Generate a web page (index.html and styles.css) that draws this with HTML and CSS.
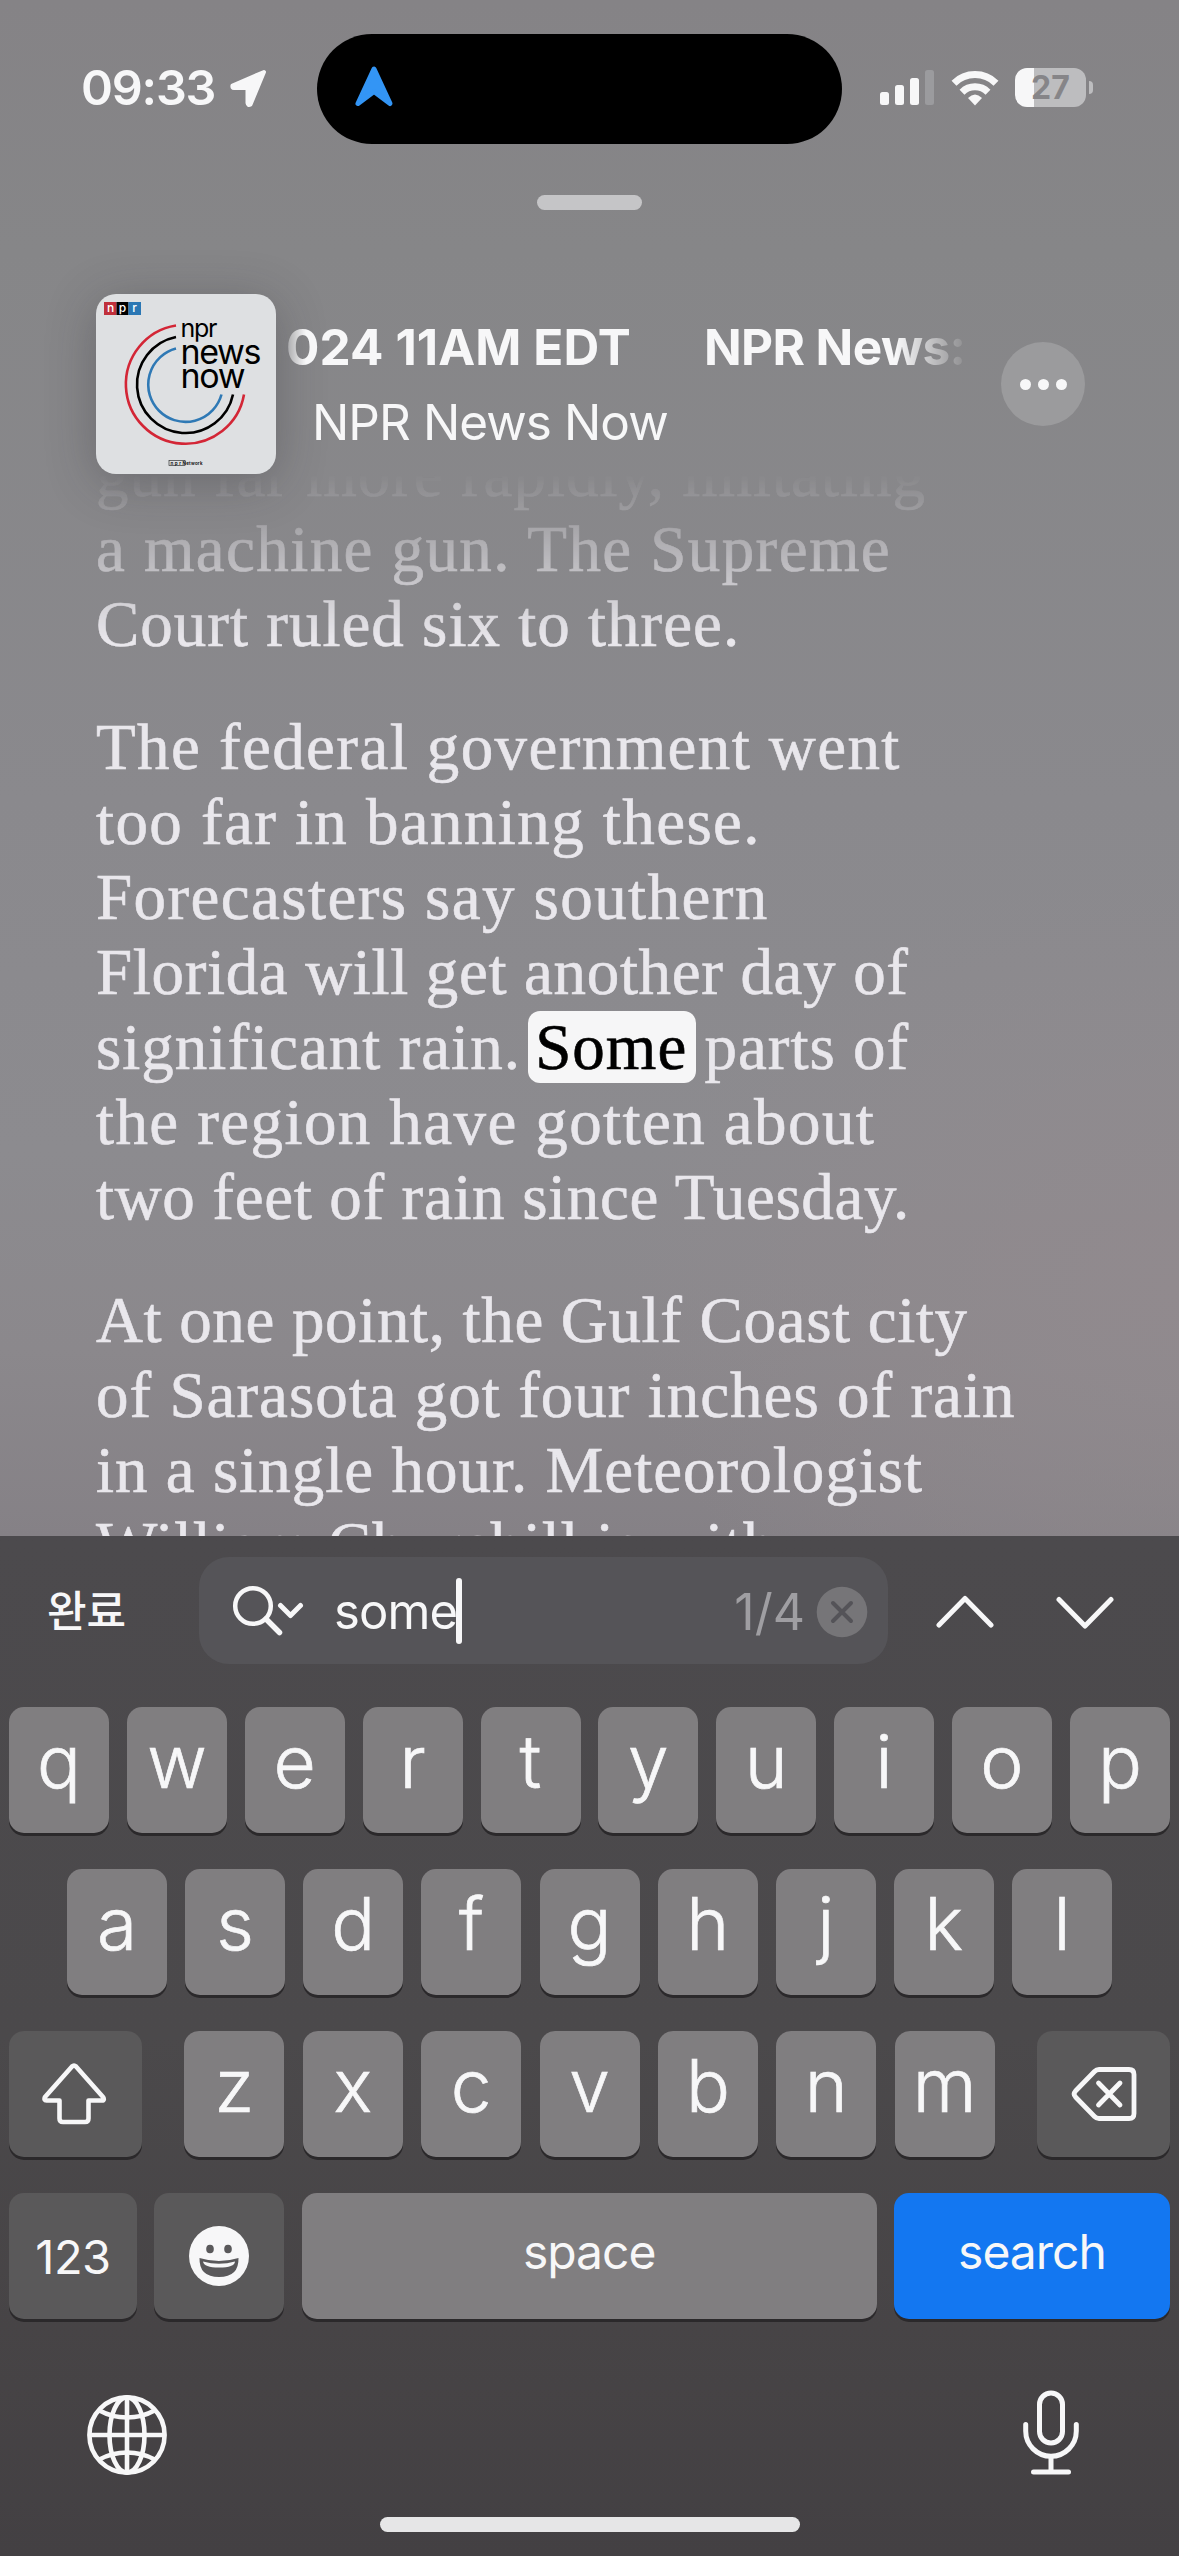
FILE: index.html
```html
<!DOCTYPE html>
<html lang="ko">
<head>
    <meta charset="UTF-8">
    <meta name="viewport" content="width=device-width, initial-scale=1.0">
    <title>NPR News Now</title>
    <link rel="stylesheet" href="styles.css">
</head>
<body>
    <div class="phone">
        <!-- Status Bar -->
        <div class="status-bar">
            <div class="clock">09:33</div>
            <svg class="location" width="38" height="39" viewBox="0 0 38 39">
                <path d="M35 3 L3.500 16.500 Q3 19 5 19 L18.500 19 L18.500 34 Q19 37 21.500 35.500 Z" fill="#f7f7f8" stroke="#f7f7f8" stroke-width="4" stroke-linejoin="round"/>
            </svg>
            <div class="island">
                <svg width="40" height="43" viewBox="0 0 40 43">
                    <path d="M20 4 L4 38.500 L20 26.500 L36 38.500 Z" fill="#3395f5" stroke="#3395f5" stroke-width="5" stroke-linejoin="round"/>
                </svg>
            </div>
            <svg class="signal" width="55" height="36" viewBox="0 0 55 36">
                <g fill="#f7f7f8">
                    <rect x="0" y="22" width="9" height="13" rx="2.500"/>
                    <rect x="15" y="15" width="9" height="20" rx="2.500"/>
                    <rect x="30" y="8" width="9" height="27" rx="2.500"/>
                </g>
                <rect x="45" y="0" width="9" height="35" rx="2.500" fill="#9b9b9e"/>
            </svg>
            <svg class="wifi" width="48" height="36" viewBox="0 0 48 36">
                <g fill="none" stroke="#f7f7f8" stroke-width="7">
                    <path d="M3 13.200 A30 30 0 0 1 45 13.200"/>
                    <path d="M11 22.200 A18.500 18.500 0 0 1 37 22.200"/>
                </g>
                <path d="M17 28 Q24 21 31 28 L24 35.500 Z" fill="#f7f7f8"/>
            </svg>
            <div class="battery">27</div>
            <div class="battery-tip"></div>
        </div>

        <div class="grabber"></div>

        <!-- Episode Header -->
        <div class="episode">
            <svg class="artwork" width="180" height="180" viewBox="0 0 180 180">
                <rect x="8" y="8" width="12.500" height="13" fill="#c0303c"/>
                <rect x="20.500" y="8" width="12" height="13" fill="#000"/>
                <rect x="32.500" y="8" width="12.500" height="13" fill="#2b77b4"/>
                <g class="art-text" fill="#fff" font-size="12" font-weight="500" text-anchor="middle">
                    <text x="14.500" y="18">n</text>
                    <text x="26.500" y="18">p</text>
                    <text x="38.500" y="18">r</text>
                </g>
                <g fill="none" stroke-width="2.600">
                    <path d="M80 31.500 A59.500 59.500 0 1 0 148 100.500" stroke="#d32636"/>
                    <path d="M80 43 A48.500 48.500 0 1 0 137 100.500" stroke="#000"/>
                    <path d="M80 54.500 A37.300 37.300 0 1 0 125.500 100.500" stroke="#2f79b5"/>
                </g>
                <g class="art-text" fill="#000">
                    <text x="84.500" y="43" font-size="25" textLength="37">npr</text>
                    <text x="84.500" y="69.500" font-size="34" textLength="81">news</text>
                    <text x="84.500" y="94" font-size="34" textLength="65">now</text>
                </g>
                <rect x="73" y="166.500" width="16" height="5" fill="none" stroke="#333" stroke-width="0.700"/>
                <text class="art-text" x="74.500" y="170.500" font-size="4.500" font-weight="600" textLength="32">n p r Network</text>
            </svg>
            <div class="episode-text">
                <div class="marquee">
                    <span>024 11AM EDT</span>
                    <span class="next-title">NPR News:</span>
                </div>
                <div class="show-name">NPR News Now</div>
            </div>
            <div class="more">
                <span></span><span></span><span></span>
            </div>
        </div>

        <!-- Transcript -->
        <div class="transcript">
            <p>
                <span class="line">gun far more rapidly, imitating</span>
                <span class="line wide">a machine gun. The Supreme</span>
                <span class="line">Court ruled six to three.</span>
            </p>
            <p>
                <span class="line wide">The federal government went</span>
                <span class="line wide">too far in banning these.</span>
                <span class="line wide">Forecasters say southern</span>
                <span class="line tight">Florida will get another day of</span>
                <span class="line">significant rain. <mark>Some</mark> parts of</span>
                <span class="line wide">the region have gotten about</span>
                <span class="line tight">two feet of rain since Tuesday.</span>
            </p>
            <p>
                <span class="line tight">At one point, the Gulf Coast city</span>
                <span class="line">of Sarasota got four inches of rain</span>
                <span class="line">in a single hour. Meteorologist</span>
                <span class="line tight">William Churchill is with</span>
            </p>
        </div>

        <div class="keyboard">
            <!-- Find Bar -->
            <div class="find-bar">
                <div class="done">완료</div>
                <div class="search-field">
                    <svg class="magnifier" width="72" height="52" viewBox="0 0 72 52">
                        <g fill="none" stroke="#f7f7f8" stroke-width="4.500" stroke-linecap="round" stroke-linejoin="round">
                            <circle cx="21" cy="21" r="17.800"/>
                            <path d="M34 34 L47.500 47.500" stroke-width="5.500"/>
                            <path d="M48.500 20.500 L58.500 30.500 L68.500 20.500" stroke-width="5"/>
                        </g>
                    </svg>
                    <div class="query">some</div>
                    <div class="caret"></div>
                    <div class="count">1/4</div>
                    <svg class="clear" width="52" height="52" viewBox="0 0 52 52">
                        <circle cx="26" cy="26" r="25.300" fill="#767578"/>
                        <path d="M17 17 L35 35 M35 17 L17 35" stroke="#545358" stroke-width="4" stroke-linecap="round"/>
                    </svg>
                </div>
                <svg class="prev" width="58" height="34" viewBox="0 0 58 34">
                    <path d="M3 30 L29 3.500 L55 30" fill="none" stroke="#f7f7f8" stroke-width="5" stroke-linecap="round" stroke-linejoin="round"/>
                </svg>
                <svg class="next" width="58" height="34" viewBox="0 0 58 34">
                    <path d="M3 3.500 L29 30 L55 3.500" fill="none" stroke="#f7f7f8" stroke-width="5" stroke-linecap="round" stroke-linejoin="round"/>
                </svg>
            </div>

            <!-- Keys -->
            <div class="row">
                <div class="key">q</div>
                <div class="key">w</div>
                <div class="key">e</div>
                <div class="key">r</div>
                <div class="key">t</div>
                <div class="key">y</div>
                <div class="key">u</div>
                <div class="key">i</div>
                <div class="key">o</div>
                <div class="key">p</div>
            </div>
            <div class="row row-home">
                <div class="key">a</div>
                <div class="key">s</div>
                <div class="key">d</div>
                <div class="key">f</div>
                <div class="key">g</div>
                <div class="key">h</div>
                <div class="key">j</div>
                <div class="key">k</div>
                <div class="key">l</div>
            </div>
            <div class="row">
                <div class="key dark shift">
                    <svg width="66" height="62" viewBox="0 0 66 62">
                        <path d="M32 2.500 Q33 2.500 34 3.500 L61 34 Q63 37.500 60 37.500 L46.500 37.500 L46.500 55.500 Q46.500 59 43 59 L21 59 Q17.500 59 17.500 55.500 L17.500 37.500 L4.500 37.500 Q1.500 37.500 3 34 L30 3.500 Q31 2.500 32 2.500 Z" fill="none" stroke="#f7f7f8" stroke-width="4.600" stroke-linejoin="round"/>
                    </svg>
                </div>
                <div class="key">z</div>
                <div class="key">x</div>
                <div class="key">c</div>
                <div class="key">v</div>
                <div class="key">b</div>
                <div class="key">n</div>
                <div class="key">m</div>
                <div class="key dark delete">
                    <svg width="66" height="56" viewBox="0 0 66 56">
                        <g fill="none" stroke="#f7f7f8" stroke-width="4.800" stroke-linecap="round" stroke-linejoin="round">
                            <path d="M28 3.500 L58 3.500 Q63 3.500 63 8.500 L63 47.500 Q63 52.500 58 52.500 L28 52.500 Q25.500 52.500 23.500 50.500 L4.500 31 Q1.800 28 4.500 25 L23.500 5.500 Q25.500 3.500 28 3.500 Z"/>
                            <path d="M27.500 17 L49 39 M49 17 L27.500 39"/>
                        </g>
                    </svg>
                </div>
            </div>
            <div class="row">
                <div class="key dark numbers">123</div>
                <div class="key dark emoji">
                    <svg width="60" height="60" viewBox="0 0 60 60">
                        <circle cx="30" cy="30" r="30" fill="#f7f7f8"/>
                        <ellipse cx="21" cy="23" rx="3.800" ry="4.300" fill="#5a595b"/>
                        <ellipse cx="39" cy="23" rx="3.800" ry="4.300" fill="#5a595b"/>
                        <path d="M10.500 32 Q30 38 49.500 32 Q50 51 30 51 Q10 51 10.500 32 Z" fill="#5a595b"/>
                        <path d="M14 35.500 Q30 40 46 35.500 Q45.500 41.500 30 41.500 Q15 41.500 14 35.500 Z" fill="#f7f7f8"/>
                    </svg>
                </div>
                <div class="key space">space</div>
                <div class="key go">search</div>
            </div>

            <div class="bottom-bar">
                <svg class="globe" width="80" height="80" viewBox="0 0 80 80">
                    <g fill="none" stroke="#f7f7f8" stroke-width="4.600">
                        <circle cx="40" cy="40" r="37.600"/>
                        <ellipse cx="40" cy="40" rx="17.500" ry="37.600"/>
                        <path d="M40 2 L40 78 M2 40 L78 40"/>
                        <path d="M12.500 15.500 Q25 22.500 40 22.500 Q55 22.500 67.500 15.500"/>
                        <path d="M12.500 64.500 Q25 57.500 40 57.500 Q55 57.500 67.500 64.500"/>
                    </g>
                </svg>
                <svg width="56" height="86" viewBox="0 0 56 86">
                    <g fill="none" stroke="#f7f7f8" stroke-width="5" stroke-linecap="round">
                        <rect x="16.500" y="3" width="23" height="50" rx="11.500"/>
                        <path d="M2.700 34.500 L2.700 41 A25.300 25.300 0 0 0 53.300 41 L53.300 34.500"/>
                        <path d="M28 67 L28 81"/>
                        <path d="M10.500 82 L45.500 82"/>
                    </g>
                </svg>
            </div>
            <div class="home-indicator"></div>
        </div>
    </div>
</body>
</html>
```
FILE: styles.css
```css
* {
    box-sizing: border-box;
}

body {
    margin: 0;
    font-family: 'Inter', 'Noto Sans CJK KR', sans-serif;
    color: #f7f7f8;
}

svg {
    display: block;
    flex: none;
}

.phone {
    width: 1179px;
    height: 2556px;
    display: flex;
    flex-direction: column;
    overflow: hidden;
    background: radial-gradient(ellipse 560px 420px at 1179px 1290px, #918a8e 0%, rgba(145, 138, 142, 0) 100%),
        linear-gradient(#858386 0, #868688 250px, #8a898d 800px, #8c8b8f 1150px, #8b888c 1350px, #858186 1536px);
}

/* Status Bar */
.status-bar {
    display: flex;
    align-items: flex-start;
    height: 195px;
    padding-left: 81px;
}

.clock {
    width: 148px;
    margin-top: 58px;
    font-size: 48.5px;
    line-height: 60px;
    font-weight: 600;
    letter-spacing: -1.2px;
    white-space: nowrap;
}

.location {
    margin-top: 69px;
}

.island {
    width: 525px;
    height: 110px;
    margin: 34px 0 0 50px;
    padding: 31px 0 0 37px;
    border-radius: 55px;
    background: #000;
}

.signal {
    margin: 70px 0 0 38px;
}

.wifi {
    margin: 70px 0 0 16px;
}

.battery {
    width: 71px;
    height: 39px;
    margin: 68px 0 0 16px;
    border-radius: 12px;
    background: linear-gradient(90deg, #f7f7f8 19px, #bdbdbf 19px);
    color: #868588;
    font-size: 32px;
    line-height: 39px;
    font-weight: 700;
    text-align: center;
}

.battery-tip {
    width: 4px;
    height: 13px;
    margin: 81px 0 0 3px;
    border-radius: 0 5px 5px 0;
    background: #bdbdbf;
}

.grabber {
    width: 105px;
    height: 15px;
    margin: 0 auto;
    border-radius: 8px;
    background: #c5c5c7;
    flex: none;
}

/* Episode Header */
.episode {
    display: flex;
    height: 180px;
    margin: 84px 94px -37px 96px;
    flex: none;
    position: relative;
    z-index: 1;
}

.artwork {
    border-radius: 20px;
    background: #dee0e2;
    box-shadow: 0 8px 50px rgba(40, 40, 45, 0.3);
}

.art-text {
    font-family: 'Inter', sans-serif;
}

.episode-text {
    width: 725px;
}

.marquee {
    display: flex;
    gap: 73px;
    width: 692px;
    height: 70px;
    margin-top: 18px;
    padding-left: 10px;
    overflow: hidden;
    font-size: 49.5px;
    line-height: 70px;
    font-weight: 700;
    white-space: nowrap;
    letter-spacing: 0.1px;
    -webkit-mask-image: linear-gradient(90deg, transparent 0, #000 30px, #000 620px, transparent 695px);
    mask-image: linear-gradient(90deg, transparent 0, #000 30px, #000 620px, transparent 695px);
}

.next-title {
    letter-spacing: -0.6px;
}

.show-name {
    padding-left: 36px;
    margin-top: 5px;
    font-size: 49.5px;
    line-height: 70px;
    letter-spacing: -0.95px;
}

.more {
    display: flex;
    align-items: center;
    justify-content: center;
    gap: 7px;
    width: 84px;
    height: 84px;
    margin-top: 48px;
    border-radius: 50%;
    background: #9b9b9d;
}

.more span {
    width: 11px;
    height: 11px;
    border-radius: 50%;
    background: #f7f7f8;
}

/* Transcript */
.transcript {
    height: 1099px;
    padding-left: 96px;
    overflow: hidden;
    flex: none;
    color: #e9e7ec;
    font-family: 'Liberation Serif', serif;
    font-size: 65px;
    line-height: 75px;
    letter-spacing: 1px;
    -webkit-text-stroke: 0.6px;
    -webkit-mask-image: linear-gradient(transparent 37px, #000 204px);
    mask-image: linear-gradient(transparent 37px, #000 204px);
}

.transcript p {
    margin: 0 0 48px;
}

.line {
    display: block;
    white-space: nowrap;
}

.wide {
    letter-spacing: 1.4px;
}

.tight {
    letter-spacing: 0.65px;
}

mark {
    margin: 0 -9px 0 -10px;
    padding: 0 9px 0 7px;
    border-radius: 12px;
    background: #f6f6f7;
    color: #000;
}

/* Keyboard */
.keyboard {
    height: 1020px;
    flex: none;
    background: linear-gradient(#4c4a4d 0, #4b494b 500px, #464345 850px, #434043 1020px);
}

.find-bar {
    display: flex;
    height: 171px;
    padding: 21px 0 0 47px;
}

.done {
    width: 152px;
    font-family: 'Noto Sans CJK KR', sans-serif;
    font-size: 43px;
    line-height: 103px;
    font-weight: 500;
}

.search-field {
    display: flex;
    width: 689px;
    height: 107px;
    border-radius: 30px;
    background: #555458;
}

.magnifier {
    margin: 28px 0 0 33px;
}

.query {
    margin-left: 30px;
    font-size: 49px;
    line-height: 110px;
    letter-spacing: -0.9px;
}

.caret {
    width: 6px;
    height: 66px;
    margin: 21px 0 0 -1px;
    border-radius: 3px;
    background: #f7f7f8;
}

.count {
    margin-left: auto;
    color: #9f9ea2;
    font-size: 50px;
    line-height: 110px;
}

.clear {
    margin: 29px 20px 0 11px;
}

.prev {
    margin: 38px 0 0 48px;
}

.next {
    margin: 39px 0 0 62px;
}

.row {
    display: flex;
    justify-content: space-between;
    padding: 0 9px;
    margin-bottom: 36px;
}

.row-home {
    padding: 0 67px;
}

.key {
    width: 100px;
    height: 126px;
    border-radius: 15px;
    background: #807e80;
    box-shadow: 0 3px 0 #2b292b;
    font-size: 73px;
    line-height: 109px;
    font-weight: 300;
    text-align: center;
    -webkit-text-stroke: 0.7px;
}

.dark {
    display: flex;
    align-items: center;
    justify-content: center;
    background: #5a595a;
}

.shift {
    width: 133px;
    margin-right: 24px;
    padding-right: 2px;
}

.delete {
    width: 133px;
    margin-left: 24px;
}

.numbers,
.space,
.go {
    font-size: 48px;
    line-height: 117px;
    font-weight: 400;
    letter-spacing: -1px;
    -webkit-text-stroke: 0;
}

.numbers {
    width: 128px;
    font-size: 47px;
    letter-spacing: -0.5px;
}

.emoji {
    width: 130px;
}

.space {
    width: 575px;
}

.go {
    width: 276px;
    background: #1377f1;
}

.bottom-bar {
    display: flex;
    justify-content: space-between;
    padding: 35px 100px 0 87px;
}

.globe {
    margin-top: 5px;
}

.home-indicator {
    width: 420px;
    height: 15px;
    margin: 41px auto 0;
    border-radius: 8px;
    background: #e6e6e7;
}
```
